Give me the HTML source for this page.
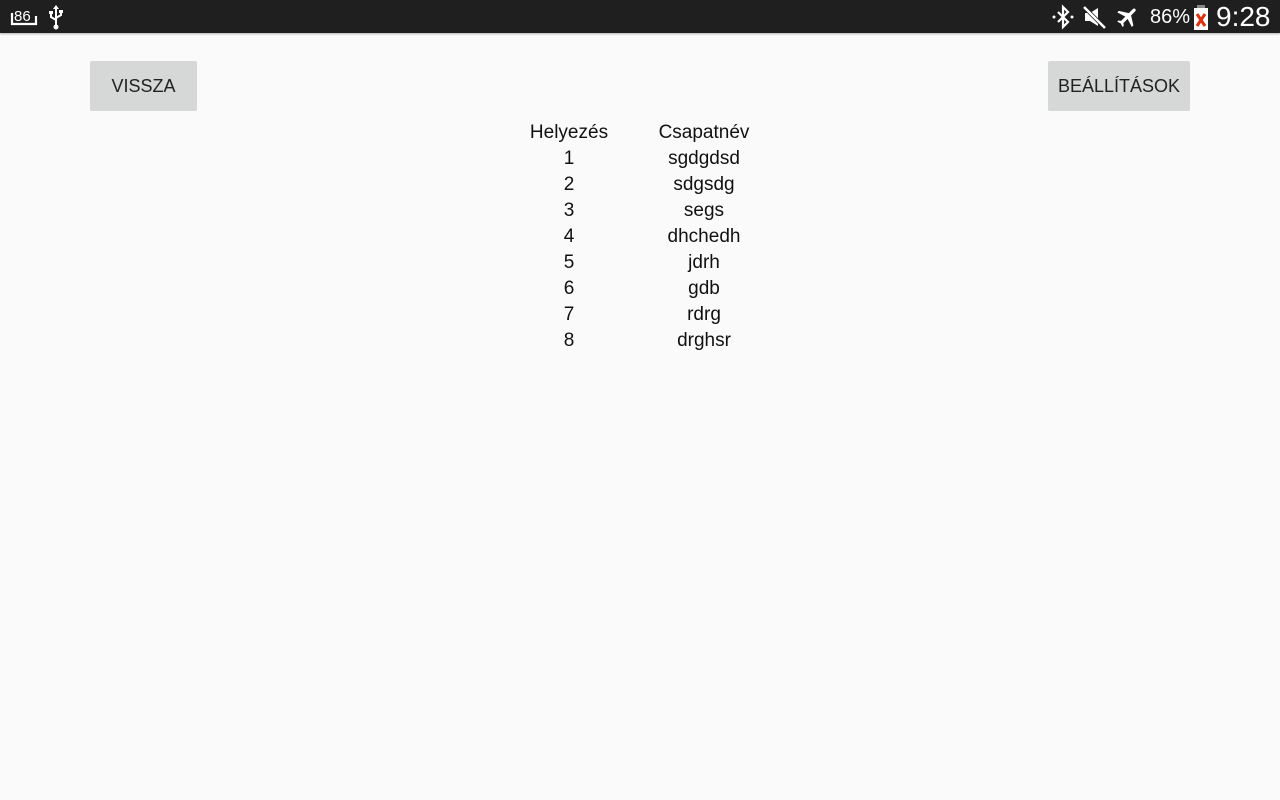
<!DOCTYPE html>
<html><head><meta charset="utf-8"><style>
body{margin:0;width:1280px;height:800px;background:#fafafa;font-family:"Liberation Sans",sans-serif;position:relative;overflow:hidden}
.sb{position:absolute;left:0;top:0;width:1280px;height:33px;background:#1f1f1f;box-shadow:0 1px 2px rgba(0,0,0,.3)}
.btn{position:absolute;top:61px;height:50px;background:#d6d7d7;border-radius:2px;color:#222;font-size:18px;line-height:50px;text-align:center}
.c{position:absolute;font-size:19px;color:#111;text-align:center;line-height:26px}
.w{color:#fff;position:absolute}
</style></head><body>
<div class="sb">
<svg style="position:absolute;left:10px;top:5px" width="28" height="22"><path d="M2 8v11h24V11" fill="none" stroke="#fff" stroke-width="2.2"/><text x="4" y="16" font-size="15" fill="#fff" font-family="Liberation Sans">86</text></svg>
<svg style="position:absolute;left:46px;top:4px" width="20" height="26"><path d="M10 3v20M10 16l-5-3V9M10 14l5-3V8" fill="none" stroke="#fff" stroke-width="2"/><path d="M10 1l-3 4h6z" fill="#fff"/><rect x="3" y="7" width="4" height="3" fill="#fff"/><rect x="13" y="6" width="4" height="3" fill="#fff"/><circle cx="10" cy="23" r="2.5" fill="#fff"/></svg>
<svg style="position:absolute;left:1050px;top:4px" width="26" height="26"><path d="M8 8l10 10-5 5V3l5 5-10 10" fill="none" stroke="#fff" stroke-width="2.2"/><circle cx="4" cy="13" r="1.5" fill="#fff"/><circle cx="22" cy="13" r="1.5" fill="#fff"/></svg>
<svg style="position:absolute;left:1082px;top:5px" width="26" height="24"><path d="M3 8h5l8-5v18l-8-5H3z" fill="#fff"/><path d="M3 3l20 20" stroke="#1f1f1f" stroke-width="4"/><path d="M2 2l21 21" stroke="#fff" stroke-width="2.5"/></svg>
<svg style="position:absolute;left:1114px;top:4px" width="28" height="26" viewBox="0 0 24 24"><path d="M21 16v-2l-8-5V3.5C13 2.7 12.3 2 11.5 2S10 2.7 10 3.5V9l-8 5v2l8-2.5V19l-2 1.5V22l3.5-1 3.5 1v-1.5L13 19v-5.5z" fill="#fff" transform="rotate(45 12 12)"/></svg>
<div class="w" style="left:1150px;top:6px;font-size:20px">86%</div>
<svg style="position:absolute;left:1192px;top:4px" width="18" height="26"><rect x="5" y="1" width="8" height="3" fill="#888"/><rect x="2" y="4" width="14" height="22" fill="#fff"/><path d="M5 10l8 12M13 10l-8 12" stroke="#e03010" stroke-width="3"/></svg>
<div class="w" style="left:1216px;top:1px;font-size:28px">9:28</div>
</div>
<div class="btn" style="left:90px;width:107px">VISSZA</div>
<div class="btn" style="left:1048px;width:142px">BEÁLLÍTÁSOK</div>
<div class="c" style="left:509px;width:120px;top:120px">Helyezés<br>1<br>2<br>3<br>4<br>5<br>6<br>7<br>8</div>
<div class="c" style="left:634px;width:140px;top:120px">Csapatnév<br>sgdgdsd<br>sdgsdg<br>segs<br>dhchedh<br>jdrh<br>gdb<br>rdrg<br>drghsr</div>
</body></html>
